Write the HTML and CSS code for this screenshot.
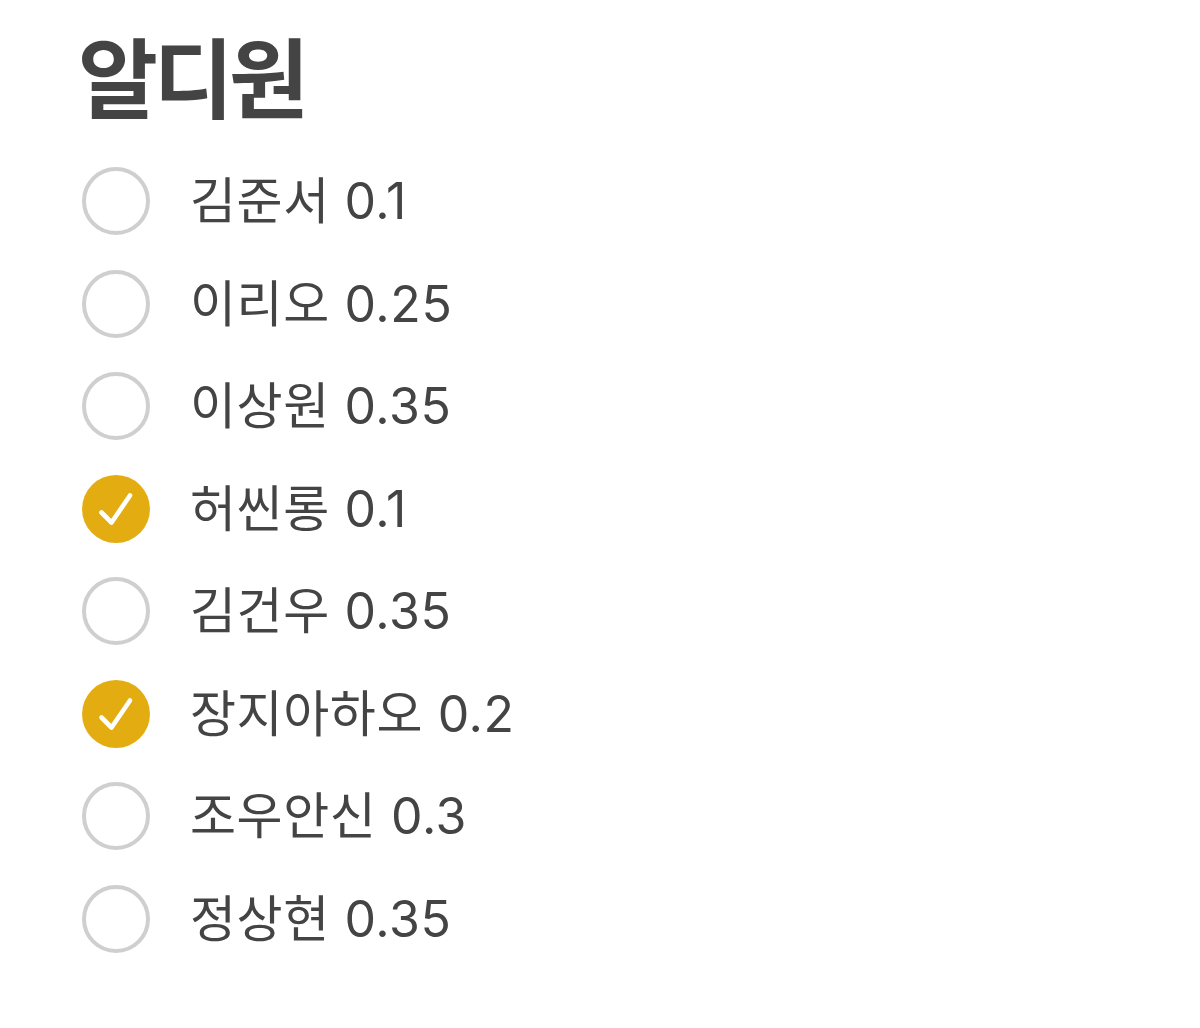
FILE: index.html
```html
<!DOCTYPE html>
<html lang="ko">
<head>
<meta charset="utf-8">
<link rel="stylesheet" href="styles.css">
</head>
<body>
<div class="page">
  <h1 class="title">알디원</h1>
  <ul class="list">
    <li class="row"><span class="radio"></span><span class="label">김준서 0.1</span></li>
    <li class="row"><span class="radio"></span><span class="label">이리오 0.25</span></li>
    <li class="row"><span class="radio"></span><span class="label">이상원 0.35</span></li>
    <li class="row"><span class="radio checked"><svg viewBox="0 0 68 68" width="68" height="68"><path d="M19.5 37.5 L29.5 47.5 L48 20.5" fill="none" stroke="#fff" stroke-width="4.6" stroke-linecap="round" stroke-linejoin="round"/></svg></span><span class="label">허씬롱 0.1</span></li>
    <li class="row"><span class="radio"></span><span class="label">김건우 0.35</span></li>
    <li class="row"><span class="radio checked"><svg viewBox="0 0 68 68" width="68" height="68"><path d="M19.5 37.5 L29.5 47.5 L48 20.5" fill="none" stroke="#fff" stroke-width="4.6" stroke-linecap="round" stroke-linejoin="round"/></svg></span><span class="label">장지아하오 0.2</span></li>
    <li class="row"><span class="radio"></span><span class="label">조우안신 0.3</span></li>
    <li class="row"><span class="radio"></span><span class="label">정상현 0.35</span></li>
  </ul>
</div>
</body>
</html>
```

FILE: styles.css
```css
html, body {
  margin: 0;
  padding: 0;
  background: #fff;
}
.page {
  padding: 30px 0 0 80px;
  font-family: "Noto Sans CJK KR", "Noto Sans", sans-serif;
  color: #444;
}
.title {
  margin: 0 0 0 -2px;
  font-size: 87px;
  line-height: 88px;
  font-weight: 700;
  color: #444;
  letter-spacing: -4.5px;
}
.list {
  list-style: none;
  margin: 32px 0 0 0;
  padding: 0;
}
.row {
  display: flex;
  align-items: center;
  height: 102.5px;
}
.radio {
  box-sizing: border-box;
  width: 68px;
  height: 68px;
  border-radius: 50%;
  border: 4px solid #cfcfcf;
  margin-left: 2px;
  flex: none;
  display: flex;
  align-items: center;
  justify-content: center;
}
.radio.checked {
  border: none;
  background: #e3ad12;
}
.label {
  margin-left: 40px;
  font-family: "Inter", "Noto Sans CJK KR", sans-serif;
  font-size: 50px;
  line-height: 1;
  letter-spacing: 0.6px;
  color: #444;
}
```
